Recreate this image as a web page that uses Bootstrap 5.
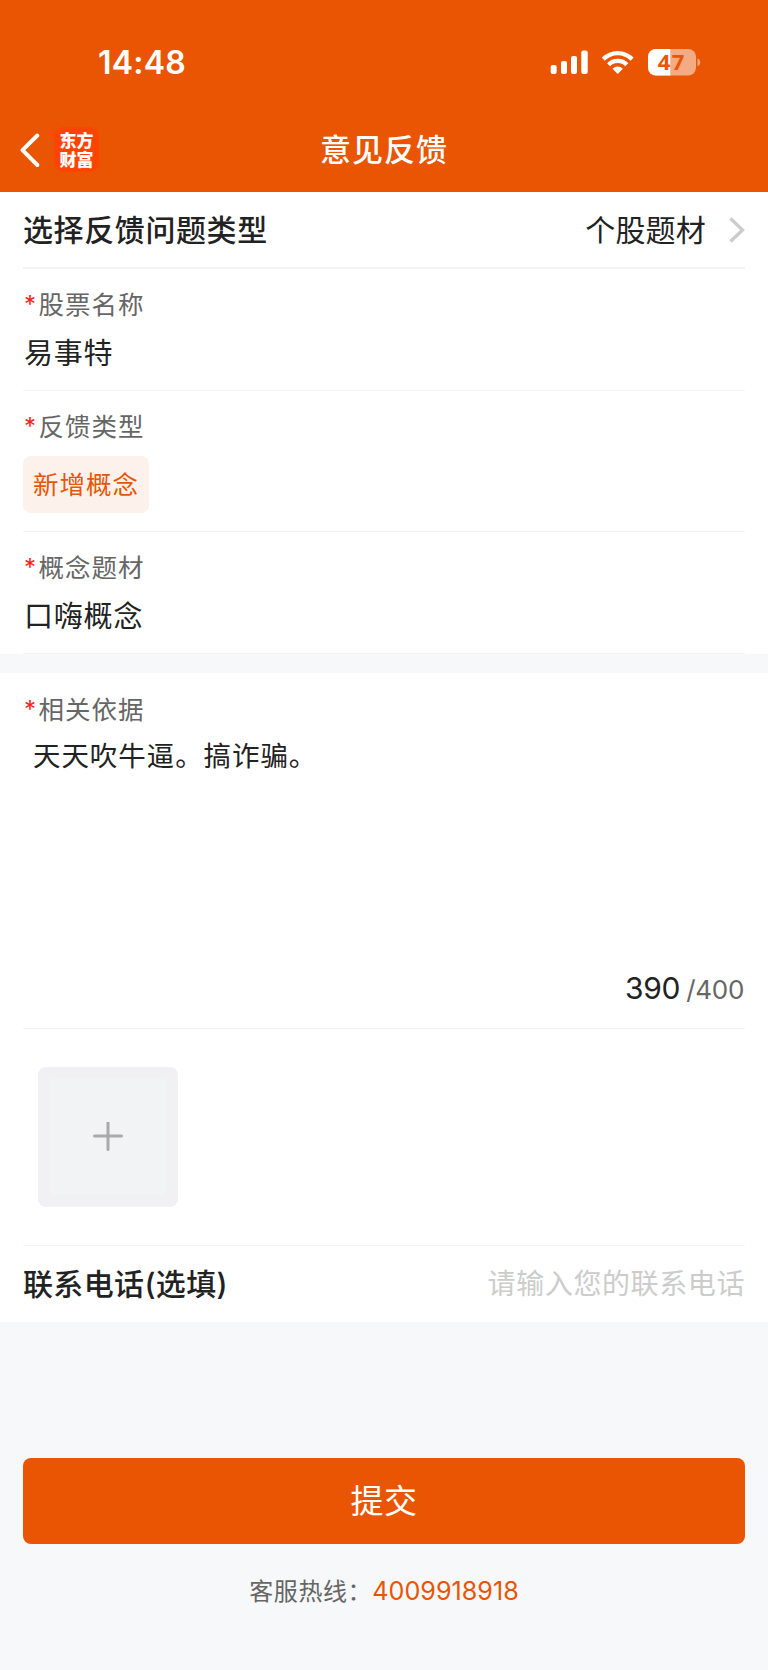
<!DOCTYPE html>
<html lang="zh-CN">
<head>
<meta charset="utf-8">
<meta name="viewport" content="width=device-width, initial-scale=1">
<title>意见反馈</title>
<link href="https://cdn.jsdelivr.net/npm/bootstrap@5.3.0/dist/css/bootstrap.min.css" rel="stylesheet">
<style>
:root { --brand: #ea5504; --ink: #222; --sub: #666; --line: #f4f4f5; --page: #f7f8fa; }
body { font-family: Inter, "Noto Sans CJK SC", sans-serif; background: var(--page); color: var(--ink); line-height: 1; min-height: 1670px; }
.app-header { background: var(--brand); height: 192px; color: #fff; }
.status-bar { height: 124px; padding: 0 66px 0 98px; }
.clock { font-size: 32px; font-weight: 600; letter-spacing: .2px; padding-top: 2px; }
.nav-bar { height: 51px; padding: 0 20px; }
.nav-side { width: 79px; }
.app-logo { width: 45px; height: 45px; border-radius: 9px; background: #ff4302; font: 900 17px/19px "Noto Sans CJK SC", sans-serif; padding-top: 3px; }
.page-title { font-size: 31px; font-weight: 500; letter-spacing: 1px; }
.form-block { padding: 0 23px; background: #fff; }
.line-b { border-bottom: 1px solid var(--line); }
.pick-row { height: 77px; border-bottom-width: 2px; }
.heading { font-size: 30px; font-weight: 500; letter-spacing: .6px; }
.heading-tel { letter-spacing: .35px; padding-bottom: 1px; }
.picked { font-size: 30px; letter-spacing: .2px; margin-right: 23px; }
.item-row { height: 122px; padding-top: 23px; }
.tag-row { height: 141px; }
.item-label { font-size: 25.5px; line-height: 26px; letter-spacing: 1px; color: var(--sub); }
.star { color: #fa1e1e; font: 24px/26px Inter, sans-serif; width: 15.5px; padding-left: 1px; letter-spacing: 0; }
.item-value { font-size: 29px; line-height: 30px; letter-spacing: .8px; margin-top: 21px; padding-left: 1px; }
.tag-chip { background: #fdf1eb; color: var(--brand); font-size: 25.5px; letter-spacing: .95px; width: 126px; height: 57px; border-radius: 8px; margin-top: 16px; }
.reason-block { margin-top: 19px; }
.reason { height: 356px; padding-top: 24px; }
.reason-text { font-size: 27.5px; line-height: 30px; letter-spacing: .93px; margin-top: 18px; padding-left: 10px; }
.counter { padding: 0 1px 22px 0; color: var(--sub); font-size: 26px; line-height: 32px; letter-spacing: -.3px; }
.counter-now { color: var(--ink); font-size: 30px; margin-right: 6px; }
.upload { height: 217px; padding: 38px 15px; }
.upload-box { width: 140px; height: 140px; border: 12px solid #f1f1f4; border-radius: 8px; background: #f1f3f5; }
.phone-row { height: 76px; }
.hint { font-size: 28px; letter-spacing: .6px; color: #ccc; }
.submit-area { padding: 136px 23px 0; }
.btn-submit, .btn-submit:hover { height: 86px; border-radius: 8px; border: 0; background: var(--brand); color: #fff; font-size: 33px; letter-spacing: .6px; padding-top: 8px; }
.hotline { font-size: 24px; letter-spacing: .6px; color: var(--sub); margin-top: 34px; line-height: 26px; }
.hotline a { color: var(--brand); font-size: 25.2px; letter-spacing: 0; }
</style>
</head>
<body>
<header class="app-header">
  <div class="status-bar d-flex align-items-center justify-content-between">
    <span class="clock">14:48</span>
    <svg width="152" height="30" viewBox="0 0 152 30" fill="#fff">
      <rect x="0.7" y="18" width="6" height="9" rx="2"/><rect x="11" y="14" width="6" height="13" rx="2"/><rect x="21" y="9" width="6" height="18" rx="2"/><rect x="31.3" y="3.500" width="6.400" height="23.500" rx="2"/>
      <path d="M51.700 10.600A22.500 22.500 0 0 1 83.700 10.600L80.700 13.800A18 18 0 0 0 54.700 13.800Z"/>
      <path d="M57 16.200A15 15 0 0 1 78.400 16.200L75.300 19.300A10.500 10.500 0 0 0 60.100 19.300Z"/>
      <path d="M62.500 21.700A7.400 7.400 0 0 1 72.900 21.700L67.700 27Z"/>
      <rect x="98" y="2" width="48" height="26.500" rx="8" fill="#f4aa82"/>
      <path d="M120.300 2H106A8 8 0 0 0 98 10V20.500A8 8 0 0 0 106 28.500H120.300Z"/>
      <path d="M147.500 11.300Q150.200 12.500 150.200 15.300T147.500 19.300Z" fill="#f4aa82"/>
      <text x="121.800" y="23.300" text-anchor="middle" font-family="Open Sans, sans-serif" font-weight="700" font-size="22" letter-spacing="1.400" fill="#ea5504">47</text>
    </svg>
  </div>
  <nav class="nav-bar d-flex align-items-center justify-content-between">
    <div class="nav-side d-flex align-items-center justify-content-between">
      <svg width="20" height="34" viewBox="0 0 20 34" fill="none" stroke="#fff" stroke-width="3.900" stroke-linecap="round" stroke-linejoin="round"><path d="M17.300 2.500L2.500 17.200L17.300 32"/></svg>
      <div class="app-logo text-center">东方<br>财富</div>
    </div>
    <h1 class="page-title m-0">意见反馈</h1>
    <div class="nav-side"></div>
  </nav>
</header>

<main>
  <section class="form-block">
    <div class="pick-row line-b d-flex align-items-center">
      <span class="heading me-auto">选择反馈问题类型</span>
      <span class="picked">个股题材</span>
      <svg width="16" height="26" viewBox="0 0 16 26" fill="none" stroke="#ccc" stroke-width="3.300"><path d="M1.500 1.500L13.500 13L1.500 24.500"/></svg>
    </div>
    <div class="item-row line-b">
      <div class="item-label d-flex"><span class="star">*</span>股票名称</div>
      <div class="item-value">易事特</div>
    </div>
    <div class="item-row tag-row line-b">
      <div class="item-label d-flex"><span class="star">*</span>反馈类型</div>
      <div class="tag-chip d-flex align-items-center justify-content-center">新增概念</div>
    </div>
    <div class="item-row line-b">
      <div class="item-label d-flex"><span class="star">*</span>概念题材</div>
      <div class="item-value">口嗨概念</div>
    </div>
  </section>

  <section class="form-block reason-block">
    <div class="reason line-b d-flex flex-column">
      <div class="item-label d-flex"><span class="star">*</span>相关依据</div>
      <div class="reason-text">天天吹牛逼。搞诈骗。</div>
      <div class="counter mt-auto d-flex justify-content-end align-items-baseline"><span class="counter-now">390</span>/400</div>
    </div>
    <div class="upload line-b">
      <div class="upload-box d-flex align-items-center justify-content-center">
        <svg width="30" height="30" viewBox="0 0 30 30" stroke="#aaa" stroke-width="3" stroke-linecap="round"><path d="M1.500 14H28.500M15 .5V27.500"/></svg>
      </div>
    </div>
    <div class="phone-row d-flex align-items-center justify-content-between">
      <span class="heading heading-tel">联系电话(选填)</span>
      <span class="hint">请输入您的联系电话</span>
    </div>
  </section>

  <footer class="submit-area">
    <button class="btn btn-submit w-100 d-flex align-items-center justify-content-center" type="button">提交</button>
    <div class="hotline text-center">客服热线：<a class="text-decoration-none" href="tel:4009918918">4009918918</a></div>
  </footer>
</main>
<script src="https://cdn.jsdelivr.net/npm/bootstrap@5.3.0/dist/js/bootstrap.bundle.min.js"></script>
</body>
</html>
